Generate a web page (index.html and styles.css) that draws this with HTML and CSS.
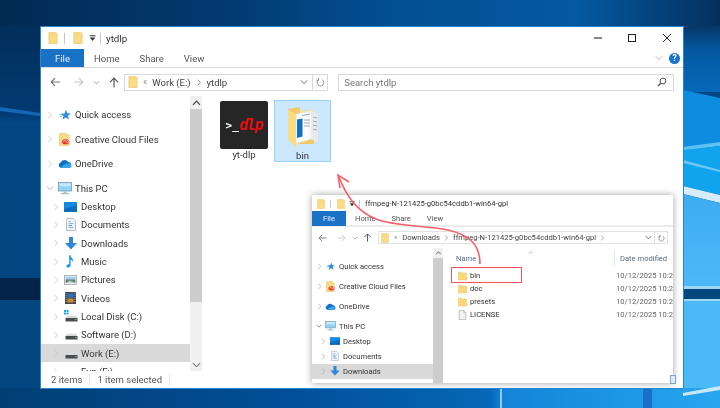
FILE: index.html
```html
<!DOCTYPE html>
<html lang="en">
<head>
<meta charset="utf-8">
<title>ytdlp</title>
<link rel="stylesheet" href="styles.css">
</head>
<body>
<svg class="defs" width="0" height="0" aria-hidden="true">
  <defs>
    <symbol id="folder" viewBox="0 0 10 13"><path d="M0.5 .5H7.5V1.5H9.5V12.5H.5Z" fill="#fbdc84" stroke="#e6c060" stroke-width=".6"/><path d="M.5 2.5H7.5V.5" fill="none" stroke="#f2cc6c" stroke-width=".5"/></symbol>
    <symbol id="sfolder" viewBox="0 0 10 10"><path d="M.3 .7H4L5 1.7H9.7V9.5H.3Z" fill="#fbd878" stroke="#e5bd5c" stroke-width=".5"/></symbol>
    <symbol id="star" viewBox="0 0 12 12"><path d="M7 .5 8.3 4.2 11.8 4.4 9 6.8 10 10.5 6.8 8.4 3.6 10.5 4.5 7 1.5 4.8 5.5 4.4Z" fill="#2f8fe0"/><path d="M2.5 5.5H0M3 7.5H1" stroke="#8cc4ee" stroke-width=".9"/></symbol>
    <symbol id="cc" viewBox="0 0 12 14"><path d="M.5 .5H8.5V2H11V13.5H.5Z" fill="#fbdc84" stroke="#e3bd5f" stroke-width=".6"/><ellipse cx="7.3" cy="9.5" rx="4" ry="2.8" fill="#e8382c"/><path d="M5 9.5a1.3 1.3 0 0 1 2.4-.7L8 10a1.3 1.3 0 1 0 1-2" fill="none" stroke="#fff" stroke-width=".7"/></symbol>
    <symbol id="cloud" viewBox="0 0 14 9"><path d="M3 8.8A2.8 2.8 0 0 1 2.6 3.4 4.3 4.3 0 0 1 10.2 3 3 3 0 0 1 11.4 8.8Z" fill="#0f72c8"/><path d="M3 8.8H12A2.2 2.2 0 0 0 12 4.7C9 3.6 5 5.5 3 8.8Z" fill="#39a3ea"/></symbol>
    <symbol id="pc" viewBox="0 0 14 13"><rect x=".5" y=".5" width="13" height="8.5" fill="#8fd3f7" stroke="#6f8ea6" stroke-width=".7"/><rect x="1.3" y="1.3" width="11.4" height="3" fill="#c6e9fb"/><path d="M5.5 9.3H8.5V11H11V12.3H3V11H5.5Z" fill="#a9c0d0"/></symbol>
    <symbol id="desktop" viewBox="0 0 13 10"><rect width="13" height="9.5" fill="#148be0"/><path d="M0 7 13 3V9.5H0Z" fill="#0a6fc6"/><rect y="8.5" width="13" height="1.2" fill="#0e5ea8"/></symbol>
    <symbol id="docs" viewBox="0 0 10 13"><path d="M.5 .5H7L9.5 3V12.5H.5Z" fill="#f1f4f7" stroke="#9aa5af" stroke-width=".7"/><path d="M2.5 3.5H5M2.5 5.5H7.5M2.5 9.5H7.5" stroke="#72a7cf" stroke-width=".8"/><path d="M2.5 7.5H6" stroke="#5c9fd4" stroke-width="1.2"/></symbol>
    <symbol id="down" viewBox="0 0 12 13"><path d="M4 0H8V6H12L6 12.5 0 6H4Z" fill="#2f87dc"/></symbol>
    <symbol id="music" viewBox="0 0 9 13"><path d="M3.2 .3H4.5C4.7 3 8.3 3.8 7.2 8 7 5.8 5.7 4.9 4.6 4.8V10.3C4.6 12 2.9 12.8 1.5 12.4.2 12 0 10.7.9 9.9 1.6 9.2 2.6 9.2 3.2 9.5Z" fill="#1d97ec"/></symbol>
    <symbol id="pics" viewBox="0 0 13 10"><rect x=".4" y=".4" width="12.2" height="9.2" fill="#eef2f5" stroke="#8a9aa8" stroke-width=".7"/><rect x="1.6" y="1.8" width="9.8" height="2.6" fill="#9fcdeb"/><path d="M1.6 4.4H11.4V8H1.6Z" fill="#5d8374"/><path d="M1.6 8 6 5.4 11.4 8Z" fill="#bcd0c6"/></symbol>
    <symbol id="videos" viewBox="0 0 11 12"><rect width="11" height="12" fill="#454a50"/><rect x="2.5" y="1.5" width="6" height="4.2" fill="#2b72c4"/><rect x="2.5" y="6.5" width="6" height="4" fill="#d08a2a"/><path d="M1.2 1V11M9.8 1V11" stroke="#b6bcc2" stroke-width=".8" stroke-dasharray="1 1"/></symbol>
    <symbol id="cdisk" viewBox="0 0 14 13"><path d="M1 2H3V4H1ZM3.6 2H5.6V4H3.6ZM1 4.6H3V6.6H1ZM3.6 4.6H5.6V6.6H3.6Z" fill="#1da5ee" transform="translate(-1 -2)"/><path d="M1.5 8 3 5.8H12L13.5 8Z" fill="#d6d9dc"/><rect x="1.5" y="8" width="12" height="3.5" fill="#4a4d50"/><rect x="11" y="9" width="1.5" height="1" fill="#58d05a"/></symbol>
    <symbol id="disk" viewBox="0 0 14 13"><path d="M1.5 8 3 5.8H12L13.5 8Z" fill="#d6d9dc"/><rect x="1.5" y="8" width="12" height="3.5" fill="#4a4d50"/><rect x="11" y="9" width="1.5" height="1" fill="#9da1a5"/></symbol>
    <symbol id="chev-r" viewBox="0 0 6 9"><path d="M1.2 1 4.8 4.5 1.2 8" fill="none" stroke="currentColor" stroke-width="1"/></symbol>
    <symbol id="chev-d" viewBox="0 0 9 6"><path d="M1 1.2 4.5 4.8 8 1.2" fill="none" stroke="currentColor" stroke-width="1"/></symbol>
    <symbol id="chev-u" viewBox="0 0 9 6"><path d="M1 4.8 4.5 1.2 8 4.8" fill="none" stroke="currentColor" stroke-width="1.2"/></symbol>
    <symbol id="arrow-l" viewBox="0 0 12 11"><path d="M11 5.5H1.5M5.5 1.2 1.2 5.5 5.5 9.8" fill="none" stroke="currentColor" stroke-width="1.3"/></symbol>
    <symbol id="arrow-r" viewBox="0 0 12 11"><path d="M1 5.5H10.5M6.5 1.2 10.8 5.5 6.5 9.8" fill="none" stroke="currentColor" stroke-width="1.3"/></symbol>
    <symbol id="arrow-u" viewBox="0 0 11 12"><path d="M5.5 11.5V1.5M1.2 5.5 5.5 1.2 9.8 5.5" fill="none" stroke="currentColor" stroke-width="1.3"/></symbol>
    <symbol id="refresh" viewBox="0 0 11 12"><path d="M3.4 3.4A4 4 0 1 0 7.6 3.4" fill="none" stroke="currentColor" stroke-width="1"/><path d="M3.2 .8V3.8H.4" fill="none" stroke="currentColor" stroke-width="1"/></symbol>
    <symbol id="qat" viewBox="0 0 7 7"><path d="M.5 .8H6.5" stroke="#333" stroke-width="1"/><path d="M.8 2.6H6.2L3.5 6Z" fill="#333"/></symbol>
    <symbol id="file" viewBox="0 0 9 12"><path d="M.5 .5H6L8.5 3V11.5H.5Z" fill="#f2f2f2" stroke="#9a9a9a" stroke-width=".7"/><path d="M6 .5V3H8.5" fill="#dcdcdc" stroke="#9a9a9a" stroke-width=".5"/></symbol>
  </defs>
</svg>

<main class="desktop">
  <svg class="wallpaper" viewBox="0 0 720 408" preserveAspectRatio="none" aria-hidden="true">
    <defs>
      <linearGradient id="gTop" x1="0" x2="1" y1="0" y2="0"><stop offset="0" stop-color="#022a53"/><stop offset=".3" stop-color="#02396f"/><stop offset=".55" stop-color="#034f93"/><stop offset=".8" stop-color="#0459a2"/><stop offset="1" stop-color="#05305e"/></linearGradient>
      <linearGradient id="gLeft" x1="0" x2="0" y1="0" y2="1"><stop offset="0" stop-color="#022a53"/><stop offset=".28" stop-color="#023b72"/><stop offset=".3" stop-color="#024683"/><stop offset="1" stop-color="#02467f"/></linearGradient>
      <linearGradient id="gBot" x1="0" x2="1" y1="0" y2="0"><stop offset="0" stop-color="#023e74"/><stop offset=".4" stop-color="#024f98"/><stop offset=".68" stop-color="#0668b8"/><stop offset=".7" stop-color="#1484d8"/><stop offset=".88" stop-color="#1c9ae6"/><stop offset="1" stop-color="#28a6ee"/></linearGradient>
      <linearGradient id="gR1" x1="0" x2="0" y1="0" y2="1"><stop offset="0" stop-color="#053766"/><stop offset=".35" stop-color="#03589f"/><stop offset="1" stop-color="#0668ba"/></linearGradient>
      <linearGradient id="gR2" x1="0" x2="0" y1="0" y2="1"><stop offset="0" stop-color="#3dacf2"/><stop offset="1" stop-color="#4cb9f7"/></linearGradient>
    </defs>
    <rect width="720" height="408" fill="#024683"/>
    <rect width="40" height="408" fill="url(#gLeft)"/>
    <rect width="720" height="26" fill="url(#gTop)"/>
    <path d="M0 107 40 113V116L0 111Z" fill="#1468b6"/>
    <rect y="278" width="40" height="22" fill="#02244a"/>
    <rect y="388" width="720" height="20" fill="url(#gBot)"/>
    <rect x="500" y="388" width="2" height="20" fill="#8ccbee"/>
    <rect x="643" y="388" width="9" height="20" fill="#1b6fc6"/>
    <rect x="683" y="26" width="37" height="66" fill="url(#gR1)"/>
    <path d="M683 90 720 98V145L683 148Z" fill="#0e8ce0"/>
    <path d="M683 147 720 142V146L683 151Z" fill="#5cc2f2"/>
    <path d="M683 150 720 146V195L683 186Z" fill="#10a4ee"/>
    <path d="M683 160 720 170V172L683 163Z" fill="#6cc8f2"/>
    <path d="M683 186 720 195V203L683 194Z" fill="#d6ecf8"/>
    <path d="M683 194 720 203V290H683Z" fill="url(#gR2)"/>
    <rect x="683" y="286" width="37" height="3" fill="#9ed8f8"/>
    <rect x="683" y="289" width="37" height="10" fill="#04477f"/>
    <rect x="683" y="299" width="37" height="2" fill="#9ed8f8"/>
    <rect x="683" y="301" width="37" height="87" fill="#4cb9f7"/>
    <path d="M683 393 720 386V390L683 396Z" fill="#c8e8f8"/>
  </svg>

  <section class="win win-main">
    <header class="title-row">
      <svg class="q-folder"><use href="#folder"/></svg>
      <i class="qsep"></i>
      <svg class="q-folder"><use href="#folder"/></svg>
      <svg class="q-drop"><use href="#qat"/></svg>
      <i class="qsep"></i>
      <span class="title">ytdlp</span>
      <div class="caption">
        <svg class="cap-btn" viewBox="0 0 10 10"><path d="M1 5H9" stroke="#222" stroke-width="1.1"/></svg>
        <svg class="cap-btn" viewBox="0 0 10 10"><rect x="1.5" y="1.5" width="7" height="7" fill="none" stroke="#222" stroke-width="1"/></svg>
        <svg class="cap-btn" viewBox="0 0 10 10"><path d="M1 1 9 9M9 1 1 9" stroke="#222" stroke-width="1"/></svg>
      </div>
    </header>
    <nav class="tab-row">
      <span class="tab-file">File</span>
      <span class="tab">Home</span>
      <span class="tab">Share</span>
      <span class="tab">View</span>
      <span class="ribbon-tools">
        <svg class="rib-chev"><use href="#chev-d"/></svg>
        <span class="help">?</span>
      </span>
    </nav>
    <div class="nav-row">
      <svg class="nav-ic back"><use href="#arrow-l"/></svg>
      <svg class="nav-ic fwd"><use href="#arrow-r"/></svg>
      <svg class="nav-drop"><use href="#chev-d"/></svg>
      <svg class="nav-ic up"><use href="#arrow-u"/></svg>
      <div class="address">
        <svg class="addr-folder"><use href="#folder"/></svg>
        <span class="crumb-more">«</span>
        <span class="crumb">Work (E:)</span>
        <svg class="crumb-sep"><use href="#chev-r"/></svg>
        <span class="crumb">ytdlp</span>
        <svg class="addr-drop"><use href="#chev-d"/></svg>
        <span class="addr-refresh"><svg class="refresh"><use href="#refresh"/></svg></span>
      </div>
      <div class="search">
        <span>Search ytdlp</span>
        <svg class="search-ic" viewBox="0 0 10 10"><circle cx="6" cy="4" r="2.9" fill="none" stroke="#555" stroke-width="1"/><path d="M4 6 1 9" stroke="#555" stroke-width="1.5"/></svg>
      </div>
    </div>
    <div class="body">
      <aside class="tree">
        <div class="t0"><svg class="chev"><use href="#chev-r"/></svg><span class="ico"><svg class="i-star"><use href="#star"/></svg></span><span>Quick access</span></div>
        <div class="t0"><svg class="chev"><use href="#chev-r"/></svg><span class="ico"><svg class="i-cc"><use href="#cc"/></svg></span><span>Creative Cloud Files</span></div>
        <div class="t0"><svg class="chev"><use href="#chev-r"/></svg><span class="ico"><svg class="i-cloud"><use href="#cloud"/></svg></span><span>OneDrive</span></div>
        <div class="t0 t-pc"><svg class="chev-open"><use href="#chev-d"/></svg><span class="ico"><svg class="i-pc"><use href="#pc"/></svg></span><span>This PC</span></div>
        <div class="t1"><svg class="chev"><use href="#chev-r"/></svg><span class="ico"><svg class="i-desk"><use href="#desktop"/></svg></span><span>Desktop</span></div>
        <div class="t1"><svg class="chev"><use href="#chev-r"/></svg><span class="ico"><svg class="i-docs"><use href="#docs"/></svg></span><span>Documents</span></div>
        <div class="t1"><svg class="chev"><use href="#chev-r"/></svg><span class="ico"><svg class="i-down"><use href="#down"/></svg></span><span>Downloads</span></div>
        <div class="t1"><svg class="chev"><use href="#chev-r"/></svg><span class="ico"><svg class="i-music"><use href="#music"/></svg></span><span>Music</span></div>
        <div class="t1"><svg class="chev"><use href="#chev-r"/></svg><span class="ico"><svg class="i-pics"><use href="#pics"/></svg></span><span>Pictures</span></div>
        <div class="t1"><svg class="chev"><use href="#chev-r"/></svg><span class="ico"><svg class="i-vid"><use href="#videos"/></svg></span><span>Videos</span></div>
        <div class="t1"><svg class="chev"><use href="#chev-r"/></svg><span class="ico"><svg class="i-disk"><use href="#cdisk"/></svg></span><span>Local Disk (C:)</span></div>
        <div class="t1"><svg class="chev"><use href="#chev-r"/></svg><span class="ico"><svg class="i-disk"><use href="#disk"/></svg></span><span>Software (D:)</span></div>
        <div class="t1 sel"><svg class="chev"><use href="#chev-r"/></svg><span class="ico"><svg class="i-disk"><use href="#disk"/></svg></span><span>Work (E:)</span></div>
        <div class="t1"><svg class="chev"><use href="#chev-r"/></svg><span class="ico"></span><span>Fun (F:)</span></div>
      </aside>
      <div class="scroll">
        <svg class="sc-btn"><use href="#chev-u"/></svg>
        <div class="sc-thumb"></div>
        <svg class="sc-btn sc-end"><use href="#chev-d"/></svg>
      </div>
      <div class="files">
        <figure class="item">
          <div class="term"><span class="prompt">&gt;_</span><span class="dlp">dlp</span></div>
          <figcaption>yt-dlp</figcaption>
        </figure>
        <figure class="item selected">
          <svg class="bigfolder" viewBox="0 0 32 42">
            <path d="M1 3 13 1 13 5 27 4V38L9 38 1 33Z" fill="#f3c869"/>
            <path d="M13 5 27 4V7L13 8Z" fill="#fce6a6"/>
            <path d="M9 8 24 5 31 8V36L24 33 9 38Z" fill="#f7f8f9" stroke="#d5d8db" stroke-width=".4"/>
            <path d="M24 5V33L31 36V8Z" fill="#e8eaec"/>
            <path d="M11 13 21 11.5V34L11 36Z" fill="#ffffff"/>
            <path d="M10 13.5 15.5 12.5V30.5L10 32Z" fill="#1070c4"/>
            <path d="M15 9.5 23 8M17 14H23M17 17H23M17 20H23M26 11 30 12M26 15 30 16M26 19 30 20M26 23 30 24" stroke="#9aa0a6" stroke-width=".9"/>
            <path d="M1 3 9 7.5V42L1 33Z" fill="#fbdc84"/>
            <path d="M1 3 9 7.5" stroke="#e4bb5a" stroke-width=".5"/>
          </svg>
          <figcaption>bin</figcaption>
        </figure>
      </div>
    </div>
    <footer class="status">
      <span>2 items</span><i class="st-sep"></i><span>1 item selected</span><i class="st-sep"></i>
    </footer>

    <section class="win-inset">
      <header class="in-title">
        <svg class="in-q"><use href="#folder"/></svg>
        <i class="in-sep"></i>
        <svg class="in-q"><use href="#folder"/></svg>
        <svg class="in-drop"><use href="#qat"/></svg>
        <i class="in-sep"></i>
        <span>ffmpeg-N-121425-g0bc54cddb1-win64-gpl</span>
      </header>
      <nav class="in-tabs">
        <span class="in-file">File</span>
        <span class="in-tab">Home</span>
        <span class="in-tab">Share</span>
        <span class="in-tab">View</span>
      </nav>
      <div class="in-nav">
        <svg class="in-ic back"><use href="#arrow-l"/></svg>
        <svg class="in-ic fwd"><use href="#arrow-r"/></svg>
        <svg class="in-dd"><use href="#chev-d"/></svg>
        <svg class="in-ic up"><use href="#arrow-u"/></svg>
        <div class="in-addr">
          <svg class="in-afolder"><use href="#folder"/></svg>
          <span class="crumb-more">«</span>
          <span>Downloads</span>
          <svg class="in-csep"><use href="#chev-r"/></svg>
          <span>ffmpeg-N-121425-g0bc54cddb1-win64-gpl</span>
          <svg class="in-csep"><use href="#chev-r"/></svg>
          <svg class="in-adrop"><use href="#chev-d"/></svg>
          <span class="in-aref"><svg class="in-refresh"><use href="#refresh"/></svg></span>
        </div>
      </div>
      <div class="in-body">
        <aside class="in-tree">
          <div class="n0"><svg class="in-chev"><use href="#chev-r"/></svg><span class="in-ico"><svg class="n-star"><use href="#star"/></svg></span><span>Quick access</span></div>
          <div class="n0"><svg class="in-chev"><use href="#chev-r"/></svg><span class="in-ico"><svg class="n-cc"><use href="#cc"/></svg></span><span>Creative Cloud Files</span></div>
          <div class="n0"><svg class="in-chev"><use href="#chev-r"/></svg><span class="in-ico"><svg class="n-cloud"><use href="#cloud"/></svg></span><span>OneDrive</span></div>
          <div class="n0 n-pcrow"><svg class="in-open"><use href="#chev-d"/></svg><span class="in-ico"><svg class="n-pc"><use href="#pc"/></svg></span><span>This PC</span></div>
          <div class="n1"><svg class="in-chev"><use href="#chev-r"/></svg><span class="in-ico"><svg class="n-desk"><use href="#desktop"/></svg></span><span>Desktop</span></div>
          <div class="n1"><svg class="in-chev"><use href="#chev-r"/></svg><span class="in-ico"><svg class="n-docs"><use href="#docs"/></svg></span><span>Documents</span></div>
          <div class="n1 n-sel"><svg class="in-chev"><use href="#chev-r"/></svg><span class="in-ico"><svg class="n-down"><use href="#down"/></svg></span><span>Downloads</span></div>
        </aside>
        <div class="in-scroll">
          <svg class="in-sc"><use href="#chev-u"/></svg>
          <div class="in-thumb"></div>
        </div>
        <div class="list">
          <div class="list-head"><span class="h-name">Name</span><svg class="h-caret"><use href="#chev-u"/></svg><i class="h-div"></i><span class="h-date">Date modified</span></div>
          <div class="list-row"><svg class="l-ic"><use href="#sfolder"/></svg><span class="l-name">bin</span><span class="l-date">10/12/2025 10:2</span></div>
          <div class="list-row"><svg class="l-ic"><use href="#sfolder"/></svg><span class="l-name">doc</span><span class="l-date">10/12/2025 10:2</span></div>
          <div class="list-row"><svg class="l-ic"><use href="#sfolder"/></svg><span class="l-name">presets</span><span class="l-date">10/12/2025 10:2</span></div>
          <div class="list-row"><svg class="l-ic"><use href="#file"/></svg><span class="l-name">LICENSE</span><span class="l-date">10/12/2025 10:2</span></div>
        </div>
      </div>
      <div class="redbox"></div>
    </section>
    <span class="view-toggle"></span>
  </section>

  <svg class="annot" viewBox="0 0 720 408" aria-hidden="true">
    <path d="M480 264C480 245 470 235 448 230 425 225 397 227 376 219 356 211 346 195 339 177" fill="none" stroke="#f4606a" stroke-width="1.6"/>
    <path d="M340 188 338 175 349 182" fill="none" stroke="#f4606a" stroke-width="1.6"/>
  </svg>
</main>
</body>
</html>
```
FILE: styles.css
```css
* { box-sizing: border-box; }
html, body { margin: 0; padding: 0; }
body { width: 720px; height: 408px; overflow: hidden; font-family: Roboto, "Open Sans", sans-serif; color: #333; }
.defs { position: absolute; }
svg { display: block; flex: none; }
i { display: block; flex: none; }
figure { margin: 0; }

.desktop { position: relative; width: 720px; height: 408px; overflow: hidden; filter: blur(.35px); }
.wallpaper { position: absolute; left: 0; top: 0; width: 720px; height: 408px; }
.annot { position: absolute; left: 0; top: 0; width: 720px; height: 408px; pointer-events: none; }

/* main window */
.win-main { position: absolute; left: 40px; top: 26px; width: 644px; height: 363px; background: #fff; border: 1px solid #2a86d0; overflow: hidden; display: flex; flex-direction: column; font-size: 9.5px; }
.title-row { height: 22px; display: flex; align-items: center; padding-left: 7px; flex: none; }
.q-folder { width: 10px; height: 12px; }
.qsep { width: 1px; height: 11px; background: #c4c4c4; margin: 0 8px 0 6px; }
.q-drop { width: 7px; height: 7px; margin-left: 6px; }
.title-row .q-drop + .qsep { margin-left: 4px; margin-right: 5px; }
.title { font-size: 9.8px; }
.caption { margin-left: auto; display: flex; gap: 24.5px; padding-right: 11.5px; }
.cap-btn { width: 10px; height: 10px; }
.tab-row { height: 19px; display: flex; align-items: center; flex: none; border-bottom: 1px solid #dadada; color: #555; }
.tab-file { width: 43px; height: 18px; background: #1a72c6; color: #e8f2fb; display: flex; align-items: center; justify-content: center; margin-right: 10px; align-self: flex-start; }
.tab { margin-right: 20px; }
.ribbon-tools { margin-left: auto; display: flex; align-items: center; gap: 6px; padding-right: 3px; }
.rib-chev { width: 8px; height: 6px; color: #aaa; }
.help { width: 11px; height: 11px; border-radius: 50%; background: #1673cf; color: #fff; font-size: 8.5px; font-weight: 700; text-align: center; line-height: 11px; }
.nav-row { height: 28px; display: flex; align-items: center; flex: none; padding-left: 9px; padding-right: 9px; }
.nav-ic { width: 11px; height: 10px; }
.nav-ic.back { color: #6f7478; }
.nav-ic.fwd { color: #c8c8c8; margin-left: 12px; }
.nav-ic.up { color: #555; width: 10px; height: 11px; margin-left: 9px; }
.nav-drop { width: 7px; height: 5px; margin-left: 9px; color: #888; }
.address { margin-left: 5px; width: 205px; height: 17px; border: 1px solid #d9d9d9; display: flex; align-items: center; padding-left: 3px; color: #444; }
.addr-folder { width: 10px; height: 12px; }
.crumb-more { color: #888; margin: 0 5px 0 5px; font-size: 9px; }
.crumb { color: #444; }
.crumb-sep { width: 6px; height: 7px; color: #777; margin: 0 5px; }
.addr-drop { width: 8px; height: 6px; margin-left: auto; margin-right: 4px; color: #555; }
.addr-refresh { width: 15px; height: 15px; border-left: 1px solid #d9d9d9; display: flex; align-items: center; justify-content: center; color: #777; }
.refresh { width: 9px; height: 10px; }
.search { margin-left: 10px; width: 337px; height: 17px; border: 1px solid #d9d9d9; display: flex; align-items: center; justify-content: space-between; padding: 0 6px 0 5px; color: #777; }
.search-ic { width: 10px; height: 10px; }
.body { flex: 1; min-height: 0; display: flex; }
.tree { width: 149px; flex: none; overflow: hidden; padding-top: 6.5px; color: #333; }
.t0, .t1 { display: flex; align-items: center; }
.t0 { height: 24.5px; padding-left: 5px; }
.t-pc { height: 18.33px; margin-top: 3.1px; }
.t1 { height: 18.33px; padding-left: 11px; }
.chev { width: 6px; height: 8px; margin: 0 1px; color: #c4c4c4; }
.chev-open { width: 8px; height: 6px; color: #aaa; }
.ico { width: 21px; display: flex; align-items: center; justify-content: center; }
.sel { background: #d9d9d9; }
.i-star { width: 12px; height: 12px; }
.i-cc { width: 11px; height: 13px; }
.i-cloud { width: 14px; height: 9px; }
.i-pc { width: 14px; height: 13px; }
.i-desk { width: 13px; height: 10px; }
.i-docs { width: 10px; height: 13px; }
.i-down { width: 12px; height: 13px; }
.i-music { width: 9px; height: 13px; }
.i-pics { width: 13px; height: 10px; }
.i-vid { width: 11px; height: 12px; }
.i-disk { width: 14px; height: 13px; }
.scroll { width: 12px; flex: none; background: #f0f0f0; display: flex; flex-direction: column; color: #444; }
.sc-btn { width: 9px; height: 6px; margin: 4px auto 3px; }
.sc-thumb { height: 193px; background: #cdcdcd; flex: none; }
.sc-end { margin: auto auto 3px; }
.files { flex: 1; display: flex; align-items: flex-start; padding: 4px 0 0 17px; gap: 5px; }
.item { display: flex; flex-direction: column; align-items: center; color: #333; width: 57px; height: 62px; border: 1px solid transparent; }
.item figcaption { line-height: 12px; }
.item:first-child { width: 50px; }
.term { width: 48px; height: 48px; background: #262626; border-radius: 2px; display: flex; align-items: center; justify-content: center; gap: 1px; flex: none; }
.prompt { color: #fff; font: 700 11px "DejaVu Sans Mono", monospace; }
.dlp { color: #f00d12; font: italic 700 15px "DejaVu Sans Mono", monospace; letter-spacing: -1.5px; }
.selected { background: #cce8ff; border-color: #99d1ff; }
.bigfolder { width: 32px; height: 42px; margin-top: 5px; margin-bottom: 2px; }
.status { height: 17px; flex: none; display: flex; align-items: center; padding-left: 10px; color: #555; }
.st-sep { width: 1px; height: 12px; background: #e4e4e4; margin: 0 7px; }

/* inset screenshot */
.win-inset { position: absolute; left: 271px; top: 168px; width: 361px; height: 188px; background: #fff; box-shadow: 0 0 7px rgba(0, 0, 0, .38); display: flex; flex-direction: column; font-size: 7.6px; overflow: hidden; color: #333; }
.in-title { height: 17px; display: flex; align-items: center; padding-left: 5px; flex: none; }
.in-q { width: 8px; height: 10px; }
.in-sep { width: 1px; height: 8px; background: #c8c8c8; margin: 0 6px 0 5px; }
.in-drop { width: 6px; height: 6px; margin-left: 4px; margin-right: -1px; }
.in-title .in-drop + .in-sep { margin-left: 5px; margin-right: 5px; }
.in-tabs { height: 15px; display: flex; align-items: center; flex: none; border-bottom: 2px solid #ececec; color: #555; }
.in-file { width: 34px; height: 15px; background: #1a72c6; color: #e8f2fb; display: flex; align-items: center; justify-content: center; margin-right: 9px; }
.in-tab { margin-right: 16px; }
.in-nav { height: 21px; display: flex; align-items: center; flex: none; padding-left: 6px; }
.in-ic { width: 9px; height: 8px; }
.in-ic.back { color: #777; }
.in-ic.fwd { color: #ccc; margin-left: 10px; }
.in-ic.up { width: 9px; height: 9px; margin-left: 5px; color: #555; }
.in-dd { width: 6px; height: 4px; margin-left: 6px; color: #888; }
.in-addr { margin-left: 6px; width: 290px; height: 13px; border: 1px solid #e2e2e2; display: flex; align-items: center; padding-left: 2px; color: #444; }
.in-afolder { width: 8px; height: 10px; }
.in-addr .crumb-more { margin: 0 5px 0 5px; font-size: 7px; }
.in-csep { width: 5px; height: 6px; color: #777; margin: 0 4px; }
.in-adrop { width: 7px; height: 5px; margin-left: auto; margin-right: 2px; color: #555; }
.in-aref { width: 13px; height: 11px; border-left: 1px solid #e2e2e2; display: flex; align-items: center; justify-content: center; color: #666; }
.in-refresh { width: 7px; height: 8px; }
.in-body { flex: 1; min-height: 0; display: flex; }
.in-tree { width: 121px; flex: none; padding-top: 8px; overflow: hidden; }
.n0, .n1 { display: flex; align-items: center; }
.n0 { height: 20px; padding-left: 4px; }
.n-pcrow { height: 15px; margin-top: 2.5px; }
.n1 { height: 15px; padding-left: 8px; }
.in-chev { width: 5px; height: 7px; margin: 0 .5px; color: #aaa; }
.in-open { width: 6px; height: 4px; color: #555; }
.in-ico { width: 17px; display: flex; align-items: center; justify-content: center; }
.n-sel { background: #d9d9d9; }
.n-star { width: 9px; height: 9px; }
.n-cc { width: 9px; height: 11px; }
.n-cloud { width: 11px; height: 7px; }
.n-pc { width: 11px; height: 10px; }
.n-desk { width: 10px; height: 8px; }
.n-docs { width: 8px; height: 10px; }
.n-down { width: 10px; height: 10px; }
.in-scroll { width: 10px; flex: none; background: #f0f0f0; color: #444; display: flex; flex-direction: column; }
.in-sc { width: 7px; height: 4px; margin: 3px auto; }
.in-thumb { flex: 1; background: #cdcdcd; }
.list { flex: 1; min-width: 0; padding-top: 1px; }
.list-head { height: 18px; display: flex; align-items: center; padding-left: 13px; color: #5a6a85; margin-bottom: 2px; }
.h-name { width: 72px; }
.h-caret { width: 5px; height: 3px; color: #888; margin-bottom: 12px; }
.h-div { width: 1px; height: 16px; background: #e4e4e4; margin-left: 81px; margin-right: 5px; }
.h-date { white-space: nowrap; }
.list-row { height: 13px; display: flex; align-items: center; padding-left: 15px; }
.l-ic { width: 9px; height: 10px; }
.l-name { width: 158px; margin-left: 3px; }
.l-date { color: #666; white-space: nowrap; }
.redbox { position: absolute; left: 139px; top: 72px; width: 71px; height: 16px; border: 1.5px solid #f2545b; }
.view-toggle { position: absolute; right: 7px; top: 348px; width: 6px; height: 9px; background: #dcebf7; border: 1px solid #7ba6c8; }
```
